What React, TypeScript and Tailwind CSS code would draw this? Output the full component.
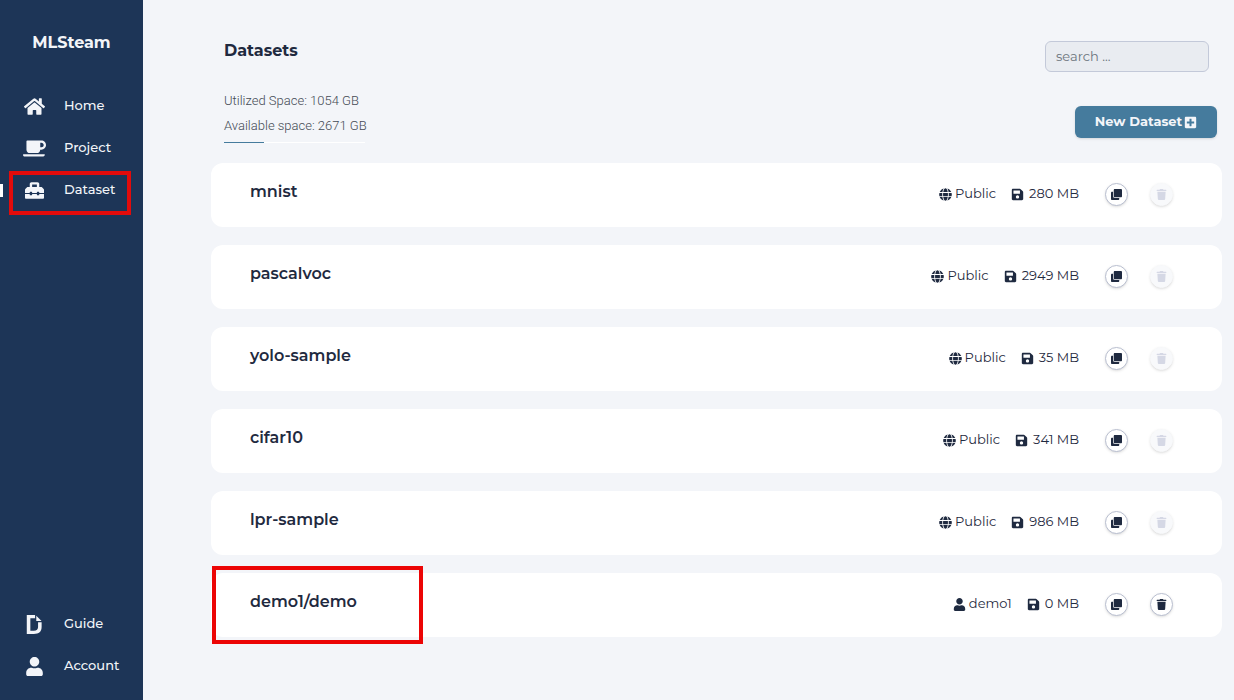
import { useState } from "react";
import type { IconType } from "react-icons";
import { FaClone, FaCoffee, FaDochub, FaGlobe, FaHome, FaPlusSquare, FaSave, FaToolbox, FaTrash, FaUser } from "react-icons/fa";

type Dataset = { name: string; owner: string; isPublic: boolean; sizeMb: number; marked?: boolean };

const datasets: Dataset[] = [
  { name: "mnist", owner: "Public", isPublic: true, sizeMb: 280 },
  { name: "pascalvoc", owner: "Public", isPublic: true, sizeMb: 2949 },
  { name: "yolo-sample", owner: "Public", isPublic: true, sizeMb: 35 },
  { name: "cifar10", owner: "Public", isPublic: true, sizeMb: 341 },
  { name: "lpr-sample", owner: "Public", isPublic: true, sizeMb: 986 },
  { name: "demo1/demo", owner: "demo1", isPublic: false, sizeMb: 0, marked: true },
];

const usedGb = 1054;
const availableGb = 2671;

// react-icons boxes are square, so wide glyphs need a larger box to keep the same height
function NavItem({
  icon: Icon,
  label,
  iconClass = "size-[19px]",
  active = false,
}: {
  icon: IconType;
  label: string;
  iconClass?: string;
  active?: boolean;
}) {
  return (
    <a
      href="#"
      aria-current={active ? "page" : undefined}
      className="relative flex h-[42px] items-center pl-[23px] text-[13px] font-medium text-[#f3f5f9]"
    >
      {active && <span className="absolute left-0 h-[13px] w-[3px] bg-white" />}
      <span className="flex w-[23px] justify-center">
        <Icon className={iconClass} />
      </span>
      <span className="ml-[18px]">{label}</span>
      {active && <span className="absolute top-0.5 right-3 -bottom-1 left-[9px] border-4 border-[#e30b0b]" />}
    </a>
  );
}

function Sidebar() {
  return (
    <aside className="flex w-[143px] shrink-0 flex-col justify-between bg-[#1d3557] pt-[33px] pb-[13px]">
      <div>
        <div className="text-center text-base leading-5 font-bold text-[#f3f5f9]">MLSteam</div>
        <nav className="mt-8">
          <NavItem icon={FaHome} label="Home" iconClass="size-[21px]" />
          <NavItem icon={FaCoffee} label="Project" iconClass="size-[23px]" />
          <NavItem icon={FaToolbox} label="Dataset" active />
        </nav>
      </div>
      <nav>
        <NavItem icon={FaDochub} label="Guide" />
        <NavItem icon={FaUser} label="Account" />
      </nav>
    </aside>
  );
}

function RoundButton({ icon: Icon, label, disabled = false }: { icon: IconType; label: string; disabled?: boolean }) {
  return (
    <button
      type="button"
      aria-label={label}
      disabled={disabled}
      className="flex size-[23px] items-center justify-center rounded-full border border-[#b9bfd0] bg-white text-[#1f2a40] shadow-sm disabled:border-[#f8f9fb] disabled:bg-[#f8f9fb] disabled:text-[#d5d8e5]"
    >
      <Icon className="size-[11px]" />
    </button>
  );
}

function DatasetRow({ name, owner, isPublic, sizeMb, marked }: Dataset) {
  const OwnerIcon = isPublic ? FaGlobe : FaUser;
  return (
    <li className="relative flex h-16 items-center rounded-xl bg-white pr-[49px] pl-[39px] text-[#1f2a40]">
      <h2 className="flex-1 pb-1.5 text-base font-semibold">{name}</h2>
      <div className="flex items-center pb-0.5">
        <div className="flex items-center text-[13px]">
          <OwnerIcon className="size-[13px]" />
          <span className="ml-[3px]">{owner}</span>
          <FaSave className="ml-[15px] size-[13px]" />
          <span className="ml-[5px]">{sizeMb} MB</span>
        </div>
        <div className="ml-[26px] flex gap-[22px]">
          <RoundButton icon={FaClone} label={`Copy ${name}`} />
          <RoundButton icon={FaTrash} label={`Delete ${name}`} disabled={isPublic} />
        </div>
      </div>
      {marked && <span className="pointer-events-none absolute -inset-y-[7px] left-px w-[211px] border-4 border-[#ec0505]" />}
    </li>
  );
}

export default function App() {
  const [query, setQuery] = useState("");
  const rows = datasets.filter((d) => d.name.includes(query));
  const usedPercent = (usedGb / (usedGb + availableGb)) * 100;

  return (
    <div className="flex min-h-screen bg-[#f3f5f9] font-['Montserrat','Inter',sans-serif]">
      <Sidebar />
      <main className="min-w-0 flex-1 pt-[41px] pr-3 pb-10 pl-[68px]">
        <header className="flex justify-between pl-[13px]">
          <div>
            <h1 className="text-base leading-5 font-bold text-[#1f2a40]">Datasets</h1>
            <div className="mt-[27px] w-[141px] font-['Roboto',sans-serif] text-[13px] leading-[25px] font-light whitespace-nowrap text-[#444b55]">
              <p>Utilized Space: {usedGb} GB</p>
              <p>Available space: {availableGb} GB</p>
              <div className="mt-1 h-px bg-white">
                <div className="h-px bg-[#457b9d]" style={{ width: `${usedPercent}%` }} />
              </div>
            </div>
          </div>
          <div className="flex flex-col items-end">
            <input
              type="search"
              aria-label="Search datasets"
              placeholder="search ..."
              value={query}
              onChange={(e) => setQuery(e.target.value)}
              className="mr-[13px] h-[31px] w-[164px] rounded-md border border-[#c3c9d9] bg-[#e9ecf1] px-2.5 pb-0.5 text-[13px] text-[#1f2a40] placeholder:text-[#6c757d]"
            />
            <button
              type="button"
              className="mt-[34px] mr-[5px] flex h-8 w-[142px] items-center justify-center gap-0.5 rounded-md bg-[#457b9d] text-[13px] font-bold text-[#f3f5f9] shadow-sm"
            >
              New Dataset
              <FaPlusSquare className="size-[13px]" />
            </button>
          </div>
        </header>
        <ul className="mt-5 flex flex-col gap-[18px]">
          {rows.map((d) => (
            <DatasetRow key={d.name} {...d} />
          ))}
        </ul>
      </main>
    </div>
  );
}
